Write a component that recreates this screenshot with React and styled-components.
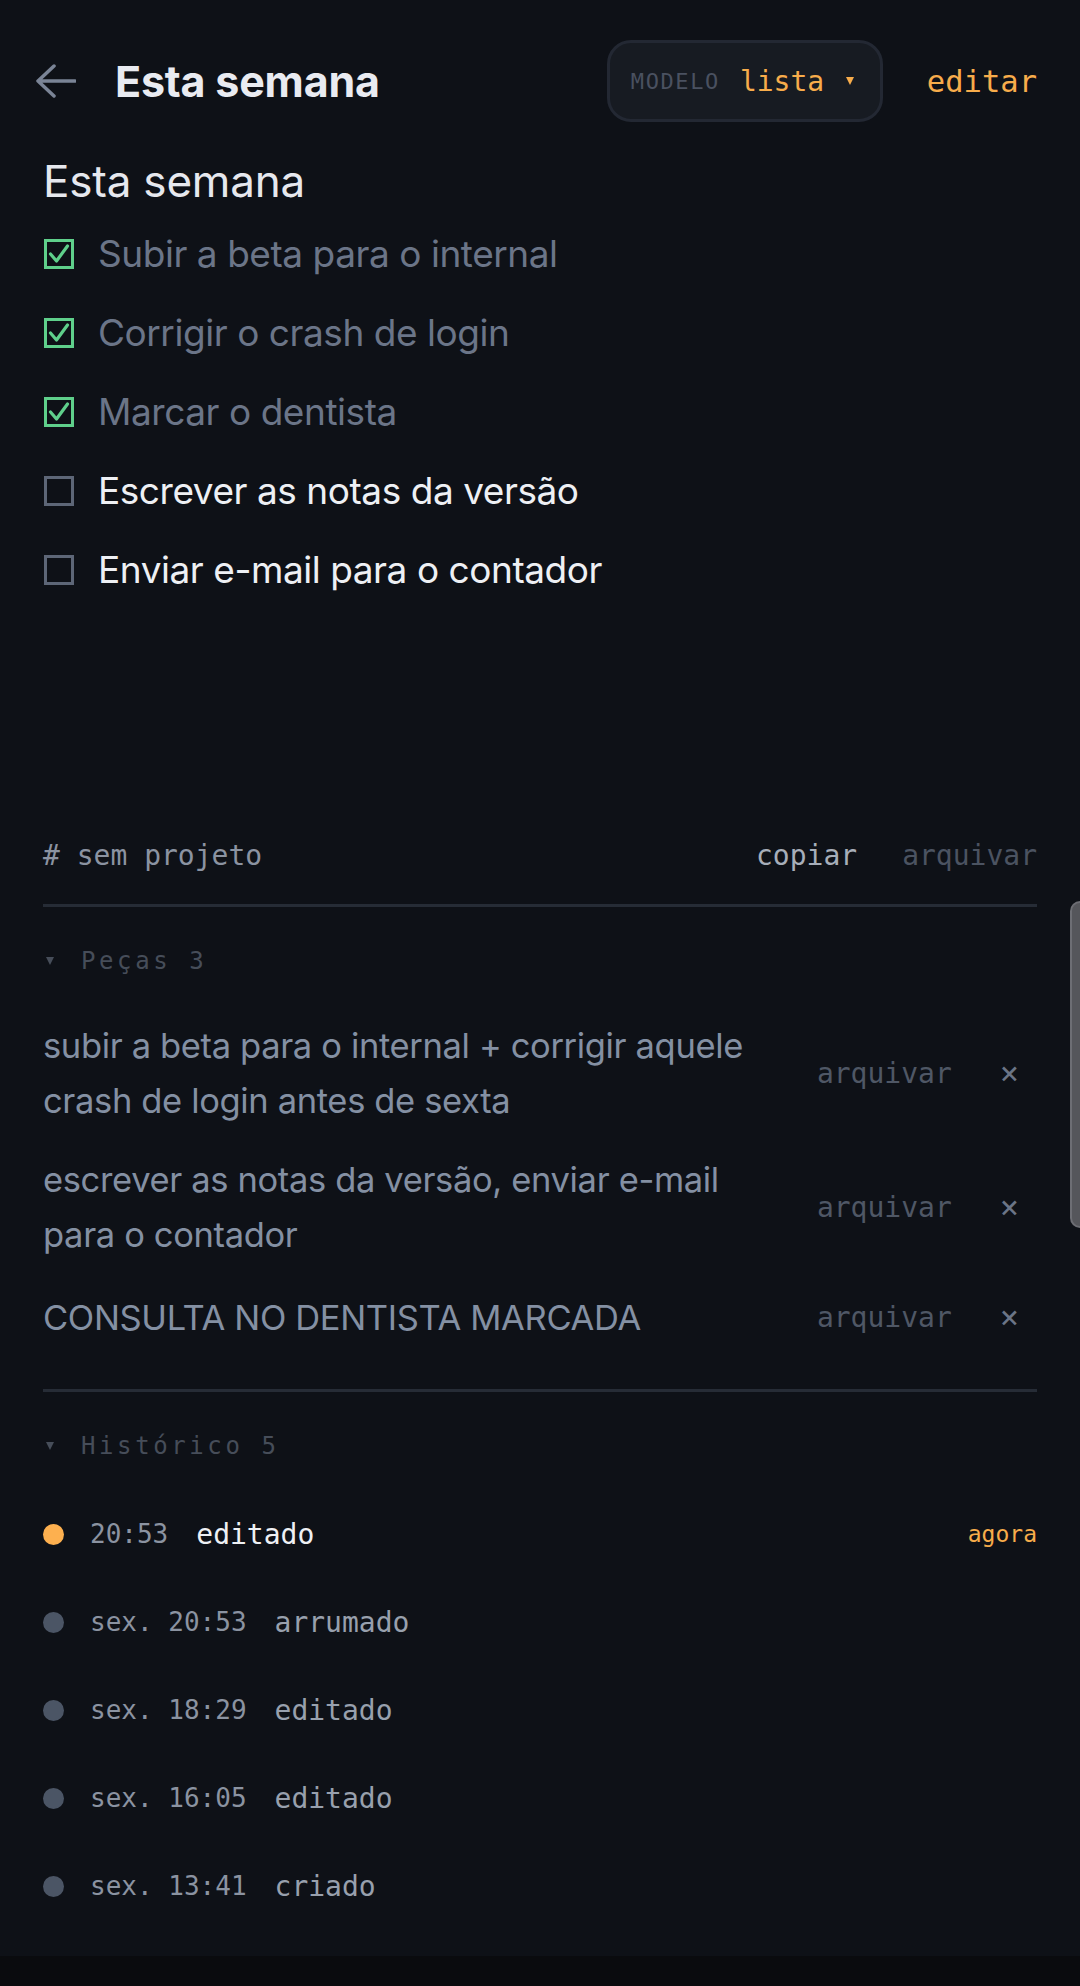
import React from "react";
import styled, { createGlobalStyle } from "styled-components";

const SANS = `Inter, "Noto Sans", "DejaVu Sans", sans-serif`;
const MONO = `"DejaVu Sans Mono", "Liberation Mono", monospace`;
const ORANGE = "#f7ac4b";

const checklist = [
    { text: "Subir a beta para o internal", done: true },
    { text: "Corrigir o crash de login", done: true },
    { text: "Marcar o dentista", done: true },
    { text: "Escrever as notas da versão", done: false },
    { text: "Enviar e-mail para o contador", done: false },
];

const pieces = [
    "subir a beta para o internal + corrigir aquele crash de login antes de sexta",
    "escrever as notas da versão, enviar e-mail para o contador",
    "CONSULTA NO DENTISTA MARCADA",
];

const history = [
    { time: "20:53", event: "editado", current: true },
    { time: "sex. 20:53", event: "arrumado" },
    { time: "sex. 18:29", event: "editado" },
    { time: "sex. 16:05", event: "editado" },
    { time: "sex. 13:41", event: "criado" },
];

const App = () => {
    return <>
        <GlobalStyle />
        <Page>
            <Main>
                <Header>
                    <BackButton aria-label="voltar">
                        <svg width="40" height="34" viewBox="0 0 40 34" fill="none">
                            <path d="M18 2 L2 17 L18 32 M2 17 H39" stroke="#7a8496" strokeWidth="3.5" strokeLinecap="round" strokeLinejoin="round" />
                        </svg>
                    </BackButton>
                    <Title>Esta semana</Title>
                    <Spacer />
                    <ModelPill>
                        <ModelLabel>MODELO</ModelLabel>
                        <ModelValue>lista</ModelValue>
                        <Caret />
                    </ModelPill>
                    <EditLink>editar</EditLink>
                </Header>

                <Content>
                    <SectionTitle>Esta semana</SectionTitle>
                    <CheckList>
                        { checklist.map(item =>
                            <CheckRow key={ item.text }>
                                <CheckBox $done={ item.done }>
                                    { item.done &&
                                        <svg width="22" height="20" viewBox="0 0 22 20" fill="none">
                                            <path d="M2.5 10 L8.5 17 L19.5 2" stroke="#5fd08b" strokeWidth="3.2" strokeLinecap="round" strokeLinejoin="round" />
                                        </svg>
                                    }
                                </CheckBox>
                                <CheckText $done={ item.done }>{ item.text }</CheckText>
                            </CheckRow>
                        ) }
                    </CheckList>

                    <ProjectHeader>
                        <ProjectName># sem projeto</ProjectName>
                        <HeaderAction $strong>copiar</HeaderAction>
                        <HeaderAction>arquivar</HeaderAction>
                    </ProjectHeader>

                    <GroupTitle><Caret $muted />Peças 3</GroupTitle>
                    <PieceList>
                        { pieces.map(p =>
                            <PieceRow key={ p }>
                                <PieceText>{ p }</PieceText>
                                <PieceAction>arquivar</PieceAction>
                                <CloseButton>×</CloseButton>
                            </PieceRow>
                        ) }
                    </PieceList>

                    <Divider />

                    <GroupTitle><Caret $muted />Histórico 5</GroupTitle>
                    <HistoryList>
                        { history.map(h =>
                            <HistoryRow key={ h.time }>
                                <Dot $current={ h.current } />
                                <HistoryTime>{ h.time }</HistoryTime>
                                <HistoryEvent $current={ h.current }>{ h.event }</HistoryEvent>
                                { h.current && <HistoryWhen>agora</HistoryWhen> }
                            </HistoryRow>
                        ) }
                    </HistoryList>
                </Content>
                <ScrollThumb />
            </Main>
            <BottomBar />
        </Page>
    </>
}

const GlobalStyle = createGlobalStyle`
    * { box-sizing: border-box; }
    html, body {
        margin: 0;
        padding: 0;
        background: #0e1117;
    }
    body {
        font-family: ${ SANS };
        -webkit-font-smoothing: antialiased;
    }
`;

const Page = styled.div`
    width: 1080px;
    min-height: 1986px;
    display: flex;
    flex-direction: column;
    background: #0e1117;
`;

const Main = styled.div`
    position: relative;
    height: 1956px;
    display: flex;
    flex-direction: column;
`;

const BottomBar = styled.div`
    height: 30px;
    background: #0a0b0e;
`;

const Header = styled.header`
    display: flex;
    align-items: center;
    height: 82px;
    margin-top: 40px;
    padding: 0 43px 0 36px;
`;

const BackButton = styled.div`
    display: flex;
    align-items: center;
    width: 40px;
    height: 34px;
`;

const Title = styled.h1`
    margin: 0 0 0 39px;
    font-family: ${ SANS };
    font-size: 43px;
    font-weight: 700;
    letter-spacing: -0.2px;
    color: #e9ebf1;
`;

const Spacer = styled.div`
    flex: 1;
`;

const ModelPill = styled.div`
    display: flex;
    align-items: center;
    height: 82px;
    width: 276px;
    padding: 0 24px 0 21px;
    border: 3px solid #232833;
    border-radius: 24px;
    background: #171b22;
`;

const ModelLabel = styled.span`
    font-family: ${ MONO };
    font-size: 22px;
    letter-spacing: 1.6px;
    color: #4a5160;
`;

const ModelValue = styled.span`
    margin-left: 20px;
    font-family: ${ MONO };
    font-size: 28px;
    color: ${ ORANGE };
`;

const Caret = styled.span`
    display: inline-block;
    width: 0;
    height: 0;
    margin-left: ${ p => p.$muted ? "3px" : "22px" };
    margin-right: ${ p => p.$muted ? "27px" : "0" };
    border-left: 4.5px solid transparent;
    border-right: 4.5px solid transparent;
    border-top: 8px solid ${ p => p.$muted ? "#464d59" : ORANGE };
`;

const EditLink = styled.span`
    margin-left: 44px;
    font-family: ${ MONO };
    font-size: 30.5px;
    color: ${ ORANGE };
`;

const Content = styled.div`
    display: flex;
    flex-direction: column;
    padding: 0 43px;
`;

const SectionTitle = styled.h2`
    margin: 32px 0 0;
    height: 54px;
    line-height: 54px;
    font-family: ${ SANS };
    font-size: 44px;
    font-weight: 400;
    letter-spacing: -0.2px;
    color: #e6e8ee;
`;

const CheckList = styled.div`
    display: flex;
    flex-direction: column;
    margin-top: 6px;
`;

const CheckRow = styled.div`
    display: flex;
    align-items: center;
    height: 79px;
`;

const CheckBox = styled.span`
    display: flex;
    align-items: center;
    justify-content: center;
    width: 30px;
    height: 30px;
    margin-left: 1px;
    border: 3px solid ${ p => p.$done ? "#5fd08b" : "#5d6677" };
    flex-shrink: 0;
`;

const CheckText = styled.span`
    margin-left: 24px;
    font-family: ${ SANS };
    font-size: 37px;
    letter-spacing: -0.45px;
    color: ${ p => p.$done ? "#6b7588" : "#eef0f4" };
`;

const ProjectHeader = styled.div`
    display: flex;
    align-items: center;
    gap: 45px;
    margin-top: 218px;
    height: 80px;
    padding-bottom: 20px;
    border-bottom: 3px solid #262c36;
`;

const ProjectName = styled.span`
    flex: 1;
    font-family: ${ MONO };
    font-size: 28px;
    color: #8b93a1;
`;

const HeaderAction = styled.span`
    font-family: ${ MONO };
    font-size: 28px;
    color: ${ p => p.$strong ? "#a7aeb9" : "#4b5361" };
`;

const GroupTitle = styled.div`
    display: flex;
    align-items: center;
    height: 40px;
    margin-top: 34px;
    font-family: ${ MONO };
    font-size: 24px;
    letter-spacing: 3.6px;
    color: #464d59;
`;

const PieceList = styled.div`
    display: flex;
    flex-direction: column;
    gap: 24px;
    margin-top: 37px;
`;

const PieceRow = styled.div`
    display: flex;
    align-items: center;
    min-height: 62px;
`;

const PieceText = styled.div`
    flex: 1;
    margin-right: 20px;
    font-family: ${ SANS };
    font-size: 34.5px;
    letter-spacing: -0.35px;
    line-height: 55px;
    color: #8490a3;
`;

const PieceAction = styled.span`
    font-family: ${ MONO };
    font-size: 28px;
    color: #4f5765;
`;

const CloseButton = styled.span`
    margin-left: 48px;
    padding-right: 18px;
    font-family: ${ MONO };
    font-size: 32px;
    color: #6b7586;
`;

const Divider = styled.hr`
    margin: 41px 0 0;
    border: none;
    height: 3px;
    background: #262c36;
`;

const HistoryList = styled.div`
    display: flex;
    flex-direction: column;
    margin-top: 24px;
`;

const HistoryRow = styled.div`
    display: flex;
    align-items: center;
    height: 88px;
`;

const Dot = styled.span`
    width: 21px;
    height: 21px;
    border-radius: 50%;
    flex-shrink: 0;
    background: ${ p => p.$current ? "#fdb04f" : "#4b5565" };
`;

const HistoryTime = styled.span`
    margin-left: 26px;
    font-family: ${ MONO };
    font-size: 26px;
    color: #8b93a1;
`;

const HistoryEvent = styled.span`
    flex: 1;
    margin-left: 28px;
    font-family: ${ MONO };
    font-size: 28px;
    color: ${ p => p.$current ? "#eef0f4" : "#98a0ad" };
`;

const HistoryWhen = styled.span`
    font-family: ${ MONO };
    font-size: 23px;
    color: ${ ORANGE };
`;

const ScrollThumb = styled.div`
    position: absolute;
    right: 0;
    top: 901px;
    width: 10px;
    height: 327px;
    background: #55565b;
    border: 2px solid #6d6e74;
    border-right: none;
    border-radius: 10px 0 0 10px;
`;

export default App;
